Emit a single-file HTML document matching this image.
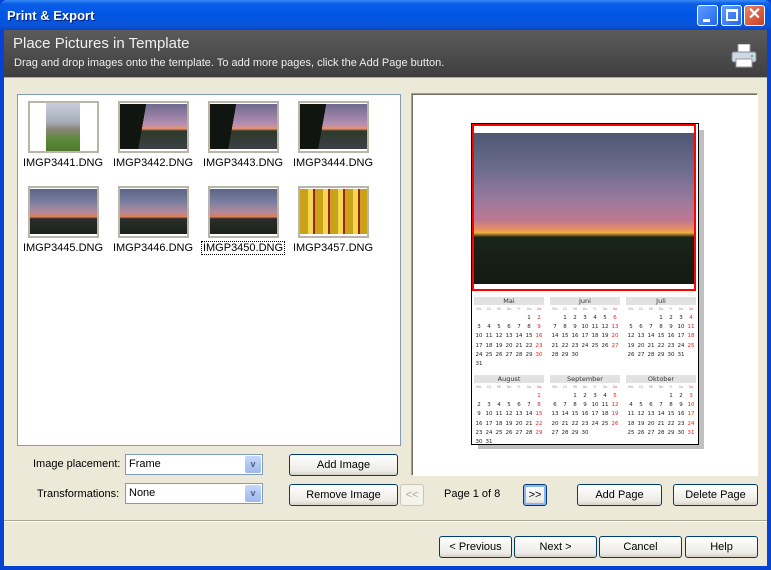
<!DOCTYPE html>
<html><head><meta charset="utf-8"><style>
*{box-sizing:border-box;margin:0;padding:0}
body{width:771px;height:570px;overflow:hidden;font-family:"Liberation Sans",sans-serif;font-size:11px;position:relative;background:#0842d0}
.abs{position:absolute}
#title{left:0;top:0;width:771px;height:30px;background:linear-gradient(#3b8cf7 0,#0a5fe8 12%,#0056e4 50%,#0a54d8 85%,#0945c8 100%);border-radius:7px 7px 0 0}
#title span{position:absolute;left:7px;top:8px;color:#fff;font-weight:bold;font-size:13px;text-shadow:1px 1px #0a1e70}
.tb{top:5px;width:21px;height:21px;border:1px solid #fff;border-radius:3px;background:linear-gradient(135deg,#5f9bff,#2468e8)}
#client{left:4px;top:30px;width:763px;height:536px;background:#ece9d8}
#hdr{left:4px;top:30px;width:763px;height:48px;background:linear-gradient(#5b5b5b,#3f3f3f);border-bottom:1px solid #aaa}
.btn{position:absolute;height:22px;border:1px solid #003c74;border-radius:3px;background:linear-gradient(#fff,#ecebe6 80%,#d6d0c5);text-align:center;line-height:20px;font-size:11px;color:#000}
.sel{position:absolute;height:21px;border:1px solid #7f9db9;background:#fff;padding-left:3px;line-height:19px}
.sel i{position:absolute;right:1px;top:1px;width:16px;height:17px;background:linear-gradient(#c6d7fc,#9db9eb);border-radius:2px;color:#4d6185;font-style:normal;font-size:9px;text-align:center;line-height:17px;font-weight:bold}
.th{position:absolute;width:71px;height:52px;border:2px solid #b9b5a8;background:#fff}
.lbl{position:absolute;width:90px;text-align:center;font-size:11px}
.sun{background:linear-gradient(#5b6585 0%,#7c7fa0 30%,#b58a9a 52%,#e07a52 62%,#2a2e2a 66%,#1b211b 100%)}
.road{background:linear-gradient(100deg,#101510 0 35%,transparent 35%),linear-gradient(#6e6a90 0%,#b58fb0 45%,#e89070 55%,#2b3a2a 60%,#3d4048 100%)}
.cal{position:absolute;font-size:5.5px;color:#222;text-align:center;width:10px;font-family:"DejaVu Sans",sans-serif}
.mt{position:absolute;width:70px;height:8px;background:#e2e2e2;font-size:6.5px;text-align:center;line-height:8px;color:#333;font-family:"DejaVu Sans",sans-serif}
</style></head><body>
<div id="title" class="abs"><span>Print &amp; Export</span>
<div class="abs tb" style="left:697px"><div class="abs" style="left:5px;top:13px;width:7px;height:3px;background:#fff"></div></div>
<div class="abs tb" style="left:721px"><div class="abs" style="left:4px;top:3px;width:12px;height:12px;border:2px solid #fff;border-top-width:3px"></div></div>
<div class="abs tb" style="left:744px;background:linear-gradient(135deg,#e8826a,#c8401f);color:#fff;font-weight:bold;font-size:16px;text-align:center;line-height:18px">✕</div>
</div>
<div id="client" class="abs"></div>
<div id="hdr" class="abs">
<div class="abs" style="left:9px;top:5px;color:#f0f0f0;font-size:15px">Place Pictures in Template</div>
<div class="abs" style="left:10px;top:27px;color:#eee;font-size:11px">Drag and drop images onto the template. To add more pages, click the Add Page button.</div>
<svg class="abs" style="left:727px;top:14px" width="26" height="24"><rect x="7" y="0" width="12" height="9" fill="#fff" stroke="#999"/><rect x="1" y="8" width="24" height="10" rx="2" fill="#cfd8e4" stroke="#7d8a9a"/><rect x="5" y="15" width="16" height="8" fill="#fff" stroke="#999"/><circle cx="21" cy="12" r="1" fill="#3a3"/></svg>
</div>
<div class="abs" style="left:17px;top:94px;width:384px;height:352px;background:#fff;border:1px solid #7f9db9"></div>
<div class="th" style="left:28px;top:101px"><div class="abs" style="left:16px;top:0;width:34px;height:48px;background:linear-gradient(#c8cede 0,#a8aeb8 40%,#8a8478 55%,#5d8a3a 75%,#4e7a2e 100%)"></div></div>
<div class="th" style="left:118px;top:101px"><div class="abs road" style="left:0;top:1px;width:67px;height:45px"></div></div>
<div class="th" style="left:208px;top:101px"><div class="abs road" style="left:0;top:1px;width:67px;height:45px"></div></div>
<div class="th" style="left:298px;top:101px"><div class="abs road" style="left:0;top:1px;width:67px;height:45px"></div></div>
<div class="th" style="left:28px;top:186px"><div class="abs sun" style="left:0;top:1px;width:67px;height:45px"></div></div>
<div class="th" style="left:118px;top:186px"><div class="abs sun" style="left:0;top:1px;width:67px;height:45px"></div></div>
<div class="th" style="left:208px;top:186px"><div class="abs sun" style="left:0;top:1px;width:67px;height:45px"></div></div>
<div class="th" style="left:298px;top:186px"><div class="abs" style="left:0;top:1px;width:67px;height:45px;background:repeating-linear-gradient(90deg,#c9a21a 0 8px,#f0d850 8px 13px,#a02018 13px 15px)"></div></div>
<div class="lbl" style="left:18px;top:157px">IMGP3441.DNG</div>
<div class="lbl" style="left:108px;top:157px">IMGP3442.DNG</div>
<div class="lbl" style="left:198px;top:157px">IMGP3443.DNG</div>
<div class="lbl" style="left:288px;top:157px">IMGP3444.DNG</div>
<div class="lbl" style="left:18px;top:242px">IMGP3445.DNG</div>
<div class="lbl" style="left:108px;top:242px">IMGP3446.DNG</div>
<div class="lbl" style="left:198px;top:242px"><span style="border:1px dotted #000;padding:0 1px">IMGP3450.DNG</span></div>
<div class="lbl" style="left:288px;top:242px">IMGP3457.DNG</div>
<div class="abs" style="left:411px;top:93px;width:347px;height:383px;background:#fff;border:1px solid;border-color:#a0a0a0 #fff #fff #a0a0a0;box-shadow:inset 1px 1px #716f64"></div>
<div class="abs" style="left:478px;top:130px;width:226px;height:319px;background:#c0c0c0"></div>
<div class="abs" style="left:471px;top:123px;width:228px;height:322px;background:#fff;border:1px solid #000"></div>
<div class="abs" style="left:472px;top:124px;width:224px;height:167px;border:2px solid #f00;background:#fff"></div>
<div class="abs" style="left:474px;top:133px;width:220px;height:151px;background:linear-gradient(#4e5672 0%,#6e6d90 25%,#9c7a9c 45%,#c07890 58%,#e89060 64%,#f4b040 66%,#1a2418 69%,#141a12 100%)"></div>
<div id="cal"></div>
<div class="abs" style="left:33px;top:458px">Image placement:</div>
<div class="abs" style="left:37px;top:488px">Transformations:</div>
<div class="sel" style="left:125px;top:454px;width:138px">Frame<i>v</i></div>
<div class="sel" style="left:125px;top:483px;width:138px">None<i>v</i></div>
<div class="btn" style="left:289px;top:454px;width:109px">Add Image</div>
<div class="btn" style="left:289px;top:484px;width:109px">Remove Image</div>
<div class="btn" style="left:400px;top:484px;width:24px;border-color:#c9c7ba;color:#aca899;background:#f5f4ea">&lt;&lt;</div>
<div class="abs" style="left:444px;top:488px">Page 1 of 8</div>
<div class="btn" style="left:523px;top:484px;width:24px;box-shadow:inset 0 0 0 2px #8cb4f2">&gt;&gt;</div>
<div class="btn" style="left:577px;top:484px;width:85px">Add Page</div>
<div class="btn" style="left:673px;top:484px;width:85px">Delete Page</div>
<div class="abs" style="left:4px;top:520px;width:763px;height:2px;border-top:1px solid #aca899;border-bottom:1px solid #fff"></div>
<div class="btn" style="left:439px;top:536px;width:73px">&lt; Previous</div>
<div class="btn" style="left:514px;top:536px;width:83px">Next &gt;</div>
<div class="btn" style="left:599px;top:536px;width:83px">Cancel</div>
<div class="btn" style="left:685px;top:536px;width:73px">Help</div>
<script>
var c=document.getElementById('cal'),h='';
var m=[['Mai',5,31],['Juni',1,30],['Juli',3,31],['August',6,31],['September',2,30],['Oktober',4,31]];
var wd=['Mo','Di','Mi','Do','Fr','Sa','So'];
var xs=[474,550,626],ys=[297,375];
m.forEach(function(mm,i){var x=xs[i%3],y=ys[Math.floor(i/3)];
h+='<div class="mt" style="left:'+x+'px;top:'+y+'px">'+mm[0]+'</div>';
for(var k=0;k<7;k++)h+='<div class="cal" style="left:'+(x+k*10)+'px;top:'+(y+10)+'px;font-size:3.5px;color:'+(k==6?'#e44':'#999')+'">'+wd[k]+'</div>';
for(var d=1;d<=mm[2];d++){var p=mm[1]+d-1,col=p%7,row=Math.floor(p/7);
h+='<div class="cal" style="left:'+(x+col*10)+'px;top:'+(y+18+row*9.2)+'px;color:'+(col==6?'#e22':'#222')+'">'+d+'</div>';}
});c.innerHTML=h;
</script>
</body></html>
